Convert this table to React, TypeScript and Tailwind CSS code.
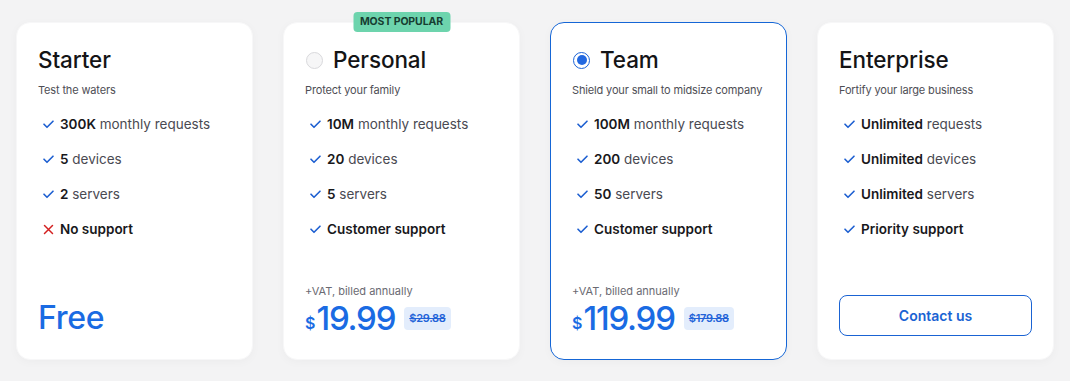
import React from "react";

type Feature = { bold: string; rest?: string; ok?: boolean };
type Plan = {
  name: string;
  sub: string;
  radio?: "on" | "off";
  popular?: boolean;
  selected?: boolean;
  features: Feature[];
  kind: "free" | "price" | "contact";
  price?: string;
  old?: string;
};

const plans: Plan[] = [
  {
    name: "Starter",
    sub: "Test the waters",
    features: [
      { bold: "300K", rest: "monthly requests" },
      { bold: "5", rest: "devices" },
      { bold: "2", rest: "servers" },
      { bold: "No support", ok: false },
    ],
    kind: "free",
  },
  {
    name: "Personal",
    sub: "Protect your family",
    radio: "off",
    popular: true,
    features: [
      { bold: "10M", rest: "monthly requests" },
      { bold: "20", rest: "devices" },
      { bold: "5", rest: "servers" },
      { bold: "Customer support" },
    ],
    kind: "price",
    price: "19.99",
    old: "$29.88",
  },
  {
    name: "Team",
    sub: "Shield your small to midsize company",
    radio: "on",
    selected: true,
    features: [
      { bold: "100M", rest: "monthly requests" },
      { bold: "200", rest: "devices" },
      { bold: "50", rest: "servers" },
      { bold: "Customer support" },
    ],
    kind: "price",
    price: "119.99",
    old: "$179.88",
  },
  {
    name: "Enterprise",
    sub: "Fortify your large business",
    features: [
      { bold: "Unlimited", rest: "requests" },
      { bold: "Unlimited", rest: "devices" },
      { bold: "Unlimited", rest: "servers" },
      { bold: "Priority support" },
    ],
    kind: "contact",
  },
];

function Check() {
  return (
    <svg width="11" height="9" viewBox="0 0 11 9" fill="none">
      <path d="M1 4.2 L4 7.3 L10 1.2" stroke="#1d5fd1" strokeWidth="1.6" strokeLinecap="round" strokeLinejoin="round" />
    </svg>
  );
}

function Cross() {
  return (
    <svg width="11" height="11" viewBox="0 0 11 11" fill="none">
      <path d="M1.5 1.5 L9.5 9.5 M9.5 1.5 L1.5 9.5" stroke="#d32020" strokeWidth="1.5" strokeLinecap="round" />
    </svg>
  );
}

function Card({ p }: { p: Plan }) {
  return (
    <div
      className={`relative flex h-[338px] w-[237px] flex-col rounded-[14px] bg-white px-[21px] pt-[25px] pb-[23px] shadow-[0_2px_10px_rgba(0,0,0,0.03)] border ${
        p.selected ? "border-[#1566d6]" : "border-[#f7f7f8]"
      }`}
    >
      {p.popular && (
        <div className="absolute left-1/2 top-[-11px] flex h-[20px] w-[97px] -translate-x-1/2 items-center justify-center rounded-[4px] bg-[#6dd4ad] text-[10.5px] font-bold tracking-[-0.1px] text-[#173d31]">
          MOST POPULAR
        </div>
      )}
      <div className="flex h-[24px] items-center">
        {p.radio === "off" && (
          <span className="mr-[10px] ml-[1px] h-[17px] w-[17px] rounded-full border border-[#d9d9dc] bg-[#f6f6f7]" />
        )}
        {p.radio === "on" && (
          <span className="mr-[10px] ml-[1px] flex h-[17px] w-[17px] items-center justify-center rounded-full border-[1.5px] border-[#1c63d6] bg-white">
            <span className="h-[10px] w-[10px] rounded-full bg-[#2268e0]" />
          </span>
        )}
        <span className="text-[22.5px] font-medium leading-[24px] tracking-[-0.1px] text-[#141416]">{p.name}</span>
      </div>
      <div className="mt-[10px] whitespace-nowrap text-[11px] leading-[16px] tracking-[-0.15px] text-[#4e4e55]">{p.sub}</div>
      <div className="mt-[16px] flex flex-col gap-[15px] pl-[5px]">
        {p.features.map((f, i) => (
          <div key={i} className="flex h-[20px] items-center">
            <span className="flex w-[17px] items-center">{f.ok === false ? <Cross /> : <Check />}</span>
            <span className="text-[13.5px] leading-[20px] whitespace-nowrap">
              <span className="font-semibold text-[#18181b]">{f.bold}</span>
              {f.rest && <span className="text-[#4a4a52]"> {f.rest}</span>}
            </span>
          </div>
        ))}
      </div>
      <div className="mt-auto">
        {p.kind === "free" && (
          <div className="flex h-[36px] items-center text-[32px] font-medium leading-[34px] tracking-[-0.3px] text-[#1a6be3]">
            Free
          </div>
        )}
        {p.kind === "price" && (
          <div>
            <div className="text-[11px] leading-[16px] text-[#6a6a72]">+VAT, billed annually</div>
            <div className="mt-[1px] flex h-[36px] items-center">
              <span className="flex items-end text-[#1a6be3]">
                <span className="mb-[2px] mr-[1px] text-[16px] font-semibold leading-[20px]">$</span>
                <span className="text-[33px] font-medium leading-[34px] tracking-[-1.2px]">{p.price}</span>
              </span>
              <span className="ml-[9px] flex h-[23px] items-center rounded-[4px] bg-[#e3edfc] px-[5px] text-[11px] font-semibold tracking-[-0.3px] text-[#2363d8] line-through">
                {p.old}
              </span>
            </div>
          </div>
        )}
        {p.kind === "contact" && (
          <button className="flex h-[41px] w-full items-center justify-center rounded-[8px] border-[1.5px] border-[#1a63d3] bg-white text-[14px] font-semibold text-[#1a63d3]">
            Contact us
          </button>
        )}
      </div>
    </div>
  );
}

export default function App() {
  return (
    <div
      className="flex h-[381px] w-[1070px] gap-[30px] bg-[#f3f3f4] pl-[16px] pt-[22px]"
      style={{ fontFamily: "Inter, 'Noto Sans', sans-serif" }}
    >
      {plans.map((p) => (
        <Card key={p.name} p={p} />
      ))}
    </div>
  );
}
